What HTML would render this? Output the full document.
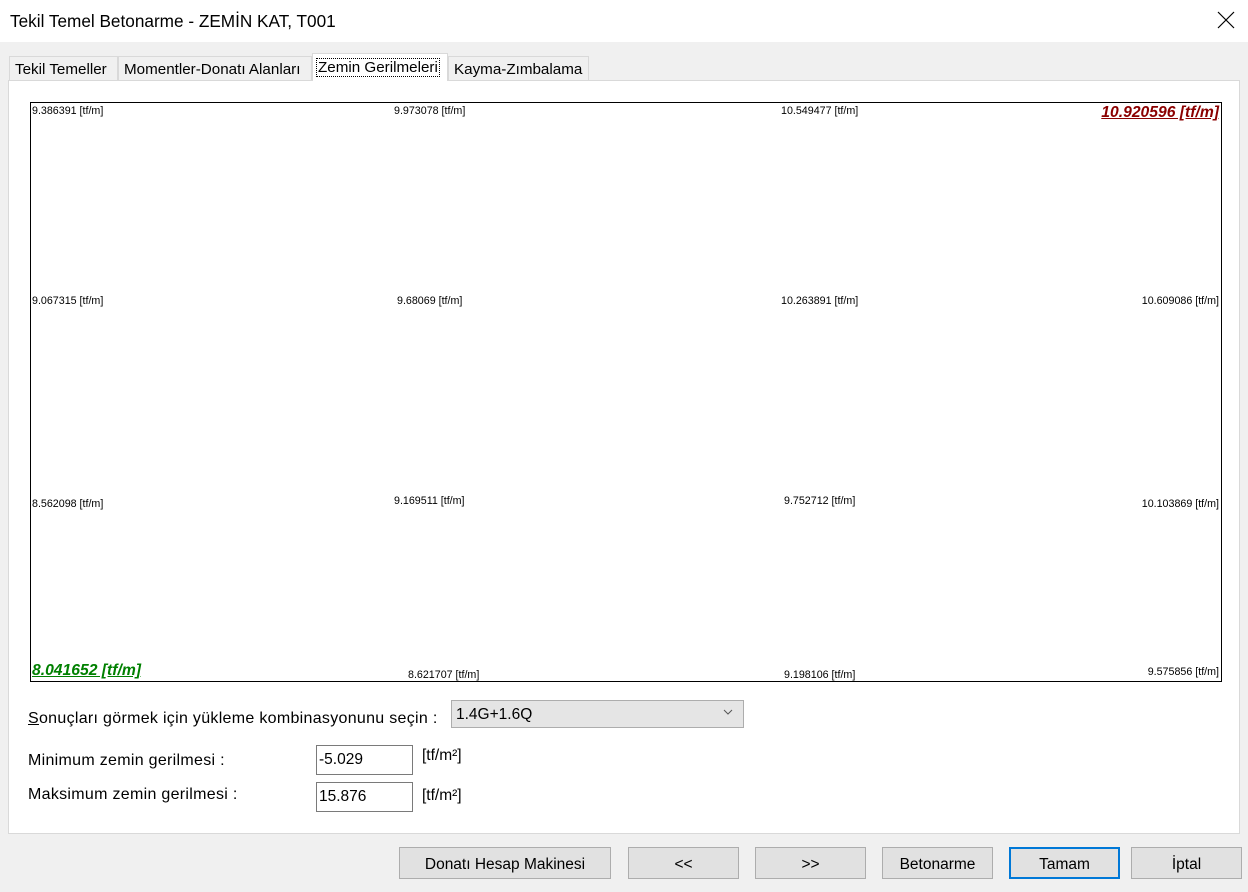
<!DOCTYPE html>
<html><head><meta charset="utf-8"><style>
body{margin:0;width:1248px;height:892px;background:#f0f0f0;position:relative;overflow:hidden;font-family:"Liberation Sans",Arial,sans-serif;color:#000}
.a{position:absolute;white-space:nowrap}
.s{font-size:10.7px;line-height:12px}
.t{font-size:16px;line-height:18px;letter-spacing:0.3px}
.tab{position:absolute;top:56px;height:24px;background:#f0f0f0;border:1px solid #d9d9d9;border-bottom:none;font-size:15.2px;line-height:25px;padding:0 5px;box-sizing:border-box;white-space:nowrap;overflow:visible}
.btn{position:absolute;top:847px;height:32px;background:#e1e1e1;border:1px solid #adadad;box-sizing:border-box;font-size:15.5px;line-height:33px;text-align:center}
.inp{position:absolute;background:#fff;border:1px solid #7a7a7a;box-sizing:border-box;font-size:15.5px;line-height:28px;padding-left:2px}
</style></head><body>
<div class="a" style="left:0;top:0;width:1248px;height:42px;background:#fff"></div>
<div class="a" style="left:10px;top:10px;font-size:17.2px;line-height:22px">Tekil Temel Betonarme - ZEMİN KAT, T001</div>
<svg class="a" style="left:1217px;top:11px" width="18" height="18"><path d="M1 1L17 17M17 1L1 17" stroke="#000" stroke-width="1.2"/></svg>

<div class="tab" style="left:9px;width:109px">Tekil Temeller</div>
<div class="tab" style="left:118px;width:194px">Momentler-Donatı Alanları</div>
<div class="tab" style="left:448px;width:141px">Kayma-Zımbalama</div>
<div class="a" style="left:8px;top:80px;width:1232px;height:754px;background:#fff;border:1px solid #d9d9d9;box-sizing:border-box"></div>
<div class="tab" style="left:312px;top:53px;width:136px;height:28px;background:#fff;line-height:27px;padding:0 4px;z-index:2"><span style="outline:1px dotted #000;padding:0 1px">Zemin Gerilmeleri</span></div>

<div class="a" style="left:30px;top:102px;width:1192px;height:580px;border:1px solid #000;box-sizing:border-box"></div>

<div class="a s" style="left:32px;top:105px">9.386391 [tf/m]</div>
<div class="a s" style="left:394px;top:105px">9.973078 [tf/m]</div>
<div class="a s" style="left:781px;top:105px">10.549477 [tf/m]</div>
<div class="a" style="right:29px;top:104px;font-size:15.7px;line-height:18px;font-weight:bold;font-style:italic;text-decoration:underline;color:#8b0000">10.920596 [tf/m]</div>

<div class="a s" style="left:32px;top:295px">9.067315 [tf/m]</div>
<div class="a s" style="left:397px;top:295px">9.68069 [tf/m]</div>
<div class="a s" style="left:781px;top:295px">10.263891 [tf/m]</div>
<div class="a s" style="right:29px;top:295px">10.609086 [tf/m]</div>

<div class="a s" style="left:32px;top:498px">8.562098 [tf/m]</div>
<div class="a s" style="left:394px;top:495px">9.169511 [tf/m]</div>
<div class="a s" style="left:784px;top:495px">9.752712 [tf/m]</div>
<div class="a s" style="right:29px;top:498px">10.103869 [tf/m]</div>

<div class="a" style="left:32px;top:662px;font-size:15.7px;line-height:18px;font-weight:bold;font-style:italic;text-decoration:underline;color:#008000">8.041652 [tf/m]</div>
<div class="a s" style="left:408px;top:669px">8.621707 [tf/m]</div>
<div class="a s" style="left:784px;top:669px">9.198106 [tf/m]</div>
<div class="a s" style="right:29px;top:666px">9.575856 [tf/m]</div>

<div class="a t" style="left:28px;top:710px"><u>S</u>onuçları görmek için yükleme kombinasyonunu seçin :</div>
<div class="a" style="left:451px;top:700px;width:293px;height:28px;background:#e5e5e5;border:1px solid #adadad;box-sizing:border-box;font-size:15.5px;line-height:28px;padding-left:4px">1.4G+1.6Q</div>
<svg class="a" style="left:723px;top:708px" width="10" height="8"><path d="M1 2L5 6L9 2" stroke="#555" fill="none"/></svg>

<div class="a t" style="left:28px;top:752px">Minimum zemin gerilmesi :</div>
<div class="inp" style="left:316px;top:745px;width:97px;height:30px">-5.029</div>
<div class="a" style="left:422px;top:747px;font-size:15.5px;line-height:18px">[tf/m²]</div>
<div class="a t" style="left:28px;top:786px">Maksimum zemin gerilmesi :</div>
<div class="inp" style="left:316px;top:782px;width:97px;height:30px">15.876</div>
<div class="a" style="left:422px;top:787px;font-size:15.5px;line-height:18px">[tf/m²]</div>

<div class="btn" style="left:399px;width:212px">Donatı Hesap Makinesi</div>
<div class="btn" style="left:628px;width:111px">&lt;&lt;</div>
<div class="btn" style="left:755px;width:111px">&gt;&gt;</div>
<div class="btn" style="left:882px;width:111px">Betonarme</div>
<div class="btn" style="left:1009px;width:111px;border:2px solid #0078d7;line-height:31px">Tamam</div>
<div class="btn" style="left:1131px;width:111px">İptal</div>
</body></html>
